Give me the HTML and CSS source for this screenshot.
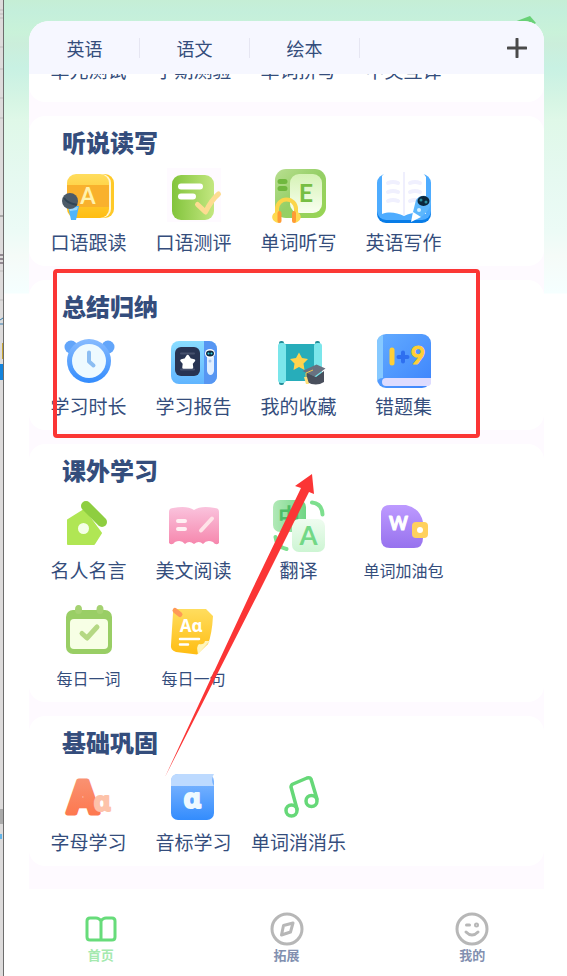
FILE: index.html
```html
<!DOCTYPE html>
<html lang="zh-CN">
<head>
<meta charset="utf-8">
<meta name="viewport" content="width=device-width, initial-scale=1">
<title>英语学习</title>
<link rel="stylesheet" href="styles.css">
</head>
<body>
<svg class="defs" width="0" height="0" aria-hidden="true">
  <defs>
    <linearGradient id="yellow" x1="0" y1="0" x2="0" y2="1"><stop offset="0" stop-color="#ffdd5e"/><stop offset="1" stop-color="#ffbd12"/></linearGradient>
    <linearGradient id="lime" x1="0" y1="0" x2="1" y2="0"><stop offset="0" stop-color="#82c43c"/><stop offset="1" stop-color="#c3e780"/></linearGradient>
    <linearGradient id="green" x1="0" y1="0" x2="1" y2="1"><stop offset="0" stop-color="#b9df91"/><stop offset=".5" stop-color="#95cf66"/><stop offset="1" stop-color="#98d552"/></linearGradient>
    <linearGradient id="pale" x1="0" y1="0" x2="0" y2="1"><stop offset="0" stop-color="#d5f2b5"/><stop offset="1" stop-color="#f9fff0"/></linearGradient>
    <linearGradient id="blue" x1="0" y1="0" x2="0" y2="1"><stop offset="0" stop-color="#87bbff"/><stop offset="1" stop-color="#338cfd"/></linearGradient>
    <linearGradient id="sky" x1="0" y1="0" x2="0" y2="1"><stop offset="0" stop-color="#8addff"/><stop offset="1" stop-color="#61b5ff"/></linearGradient>
    <linearGradient id="book" x1="0" y1="0" x2="1" y2="1"><stop offset="0" stop-color="#63acff"/><stop offset="1" stop-color="#3d84fc"/></linearGradient>
    <linearGradient id="pink" x1="0" y1="0" x2="0" y2="1"><stop offset="0" stop-color="#fac3dd"/><stop offset="1" stop-color="#f687ad"/></linearGradient>
    <linearGradient id="purple" x1="0" y1="0" x2="0" y2="1"><stop offset="0" stop-color="#bd9aff"/><stop offset="1" stop-color="#9772ee"/></linearGradient>
    <linearGradient id="mint" x1="0" y1="0" x2="1" y2="0"><stop offset="0" stop-color="#b2e9b7"/><stop offset="1" stop-color="#70d584"/></linearGradient>
    <linearGradient id="mintpale" x1="0" y1="0" x2="0" y2="1"><stop offset="0" stop-color="#effcf0"/><stop offset="1" stop-color="#cdf5d3"/></linearGradient>
    <linearGradient id="orange" x1="0" y1="0" x2="0" y2="1"><stop offset="0" stop-color="#f79b7e"/><stop offset="1" stop-color="#ff7044"/></linearGradient>
  </defs>
</svg>

<div class="app">
  <svg class="leaf" width="22" height="12" viewBox="0 0 22 12" aria-hidden="true"><path d="M0 6 16 0 22 7 14 12Z" fill="#69d177"/></svg>

  <div class="panel">
    <nav class="tabs" aria-label="学科">
      <a class="tab" href="#english">英语</a>
      <a class="tab" href="#chinese">语文</a>
      <a class="tab" href="#books">绘本</a>
      <button class="add" type="button" aria-label="添加">
        <svg width="20" height="20" viewBox="0 0 20 20"><path d="M10 1v18M1 10h18" stroke="#4a4a4a" stroke-width="3" stroke-linecap="round"/></svg>
      </button>
    </nav>

    <main class="cards">
      <section class="card card-cut" aria-label="测试">
        <ul class="grid">
          <li><a class="item" href="#"><span class="label">单元测试</span></a></li>
          <li><a class="item" href="#"><span class="label">学期测验</span></a></li>
          <li><a class="item" href="#"><span class="label">单词拼写</span></a></li>
          <li><a class="item" href="#"><span class="label">中英互译</span></a></li>
        </ul>
      </section>

      <section class="card">
        <h2>听说读写</h2>
        <ul class="grid">
          <li><a class="item" href="#">
            <svg class="icon" viewBox="0 0 54 54" aria-hidden="true">
              <rect x="12" y="6" width="40" height="44" rx="9" fill="#ffc928"/>
              <rect x="9" y="6" width="40" height="44" rx="9" fill="#fff6d4"/>
              <rect x="5" y="6" width="42" height="44" rx="9" fill="url(#yellow)"/>
              <path d="M5 17h42v22H5z" fill="#f9b12d"/>
              <text x="26" y="36" class="glyph" font-size="22" fill="#fff2ae">A</text>
              <path d="M6 38h11l-3 14h-5z" fill="#4fb5fb"/>
              <path d="M7 40l9-1-1 3-7 1z" fill="#9ad8ff"/>
              <circle cx="8" cy="33" r="8" fill="#4c5b69"/>
              <path d="M2 30c5 7 9 5 13 7" fill="none" stroke="#314555" stroke-width="2"/>
            </svg><span class="label">口语跟读</span></a></li>
          <li><a class="item" href="#">
            <svg class="icon" viewBox="0 0 54 54" aria-hidden="true">
              <rect width="54" height="54" fill="#fefaff"/>
              <rect x="5" y="7" width="42" height="45" rx="9" fill="url(#lime)"/>
              <path d="M14 18.500h19M14 28.500h12" stroke="#fff" stroke-width="6" stroke-linecap="round"/>
              <path d="M30.500 36.500l8 7.500c4-8 7-13 13-18" fill="none" stroke="#fddc91" stroke-width="5" stroke-linecap="round" stroke-linejoin="round"/>
            </svg><span class="label">口语测评</span></a></li>
          <li><a class="item" href="#">
            <svg class="icon" viewBox="0 0 54 54" aria-hidden="true">
              <rect x="3" y="1" width="51" height="49" rx="11" fill="url(#green)"/>
              <rect x="18" y="6" width="32" height="39" rx="9" fill="url(#pale)"/>
              <path d="M8 13.500h5M8 20.500h5" stroke="#70b83e" stroke-width="5" stroke-linecap="round"/>
              <text x="34" y="34" class="glyph" font-size="25" fill="#77be43">E</text>
              <path d="M5 47V41a9.500 9.500 0 0 1 19 0v6" fill="none" stroke="#fbd549" stroke-width="4"/>
              <path d="M7 43c-9 1-9 11 0 12zM22 43c9 1 9 11 0 12z" fill="#ffda50"/>
              <path d="M7.500 45v8M22 45v8" stroke="#ff9b35" stroke-width="4" stroke-linecap="round"/>
            </svg><span class="label">单词听写</span></a></li>
          <li><a class="item" href="#">
            <svg class="icon" viewBox="0 0 54 54" aria-hidden="true">
              <rect y="9" width="54" height="46" rx="9" fill="#087ce7"/>
              <rect y="6" width="54" height="46" rx="9" fill="#4eacff"/>
              <path d="M5 8c7-8 15-6 22-4 7-3 16-4 22 5v37c-8-3-15-1-22 2-7-3-14-5-22-2z" fill="#fff"/>
              <path d="M27 4v43" stroke="#efeffd" stroke-width="2"/>
              <path d="M11 15q5-2 10 0M11 24q5-2 10 0M11 33q5-2 10 0M33 15q5-2 10 0M33 24q5-2 10 0M33 33q5-2 9 0" fill="none" stroke="#f0f0fe" stroke-width="4" stroke-linecap="round"/>
              <path d="M39 32c4-7 14-5 15 2-1 7-5 12-14 18l-5-4z" fill="#5db7fd"/>
              <path d="M36 44l8 5-10 5z" fill="#fff"/>
              <ellipse cx="46.500" cy="33" rx="6" ry="5" fill="#0b273c"/>
              <circle cx="44" cy="32" r="1.500" fill="#2a8c9c"/><circle cx="49" cy="34" r="1.500" fill="#2a8c9c"/>
              <circle cx="42" cy="42" r="2" fill="#d9f2ff"/>
            </svg><span class="label">英语写作</span></a></li>
        </ul>
      </section>

      <section class="card">
        <h2>总结归纳</h2>
        <ul class="grid">
          <li><a class="item" href="#">
            <svg class="icon" viewBox="0 0 54 54" aria-hidden="true">
              <circle cx="9" cy="15" r="6.500" fill="#62a5fa"/><circle cx="46" cy="15" r="6.500" fill="#62a5fa"/>
              <circle cx="27" cy="29" r="22" fill="url(#blue)"/>
              <circle cx="27" cy="29" r="17" fill="#eefaff"/>
              <path d="M27 20.500V29.500l4.500 4" fill="none" stroke="#8bbdf2" stroke-width="4" stroke-linecap="round" stroke-linejoin="round"/>
            </svg><span class="label">学习时长</span></a></li>
          <li><a class="item" href="#">
            <svg class="icon" viewBox="0 0 54 54" aria-hidden="true">
              <rect x="4" y="9" width="46" height="43" rx="8" fill="url(#sky)"/>
              <path d="M37 9h5a8 8 0 0 1 8 8v27a8 8 0 0 1-8 8h-5z" fill="#5796f2"/>
              <rect x="8" y="15" width="25" height="29" rx="6" fill="#283453"/>
              <path d="M14 21.500h13M14 37.500h13" stroke="#46516e" stroke-width="2" stroke-linecap="round"/>
              <path d="M20.700 24l2.300 3.500 4 1-2.500 3 .5 4h-8.500l.5-4-2.500-3 4-1z" fill="#fff" stroke="#fff" stroke-width="2.500" stroke-linejoin="round"/>
              <path d="M40 25h7v14q-1 4-3.500 4T40 39z" fill="#e1efff"/>
              <ellipse cx="43" cy="21.500" rx="5" ry="4.500" fill="#fff"/>
              <ellipse cx="43" cy="21.500" rx="4" ry="3" fill="#102a40"/>
              <circle cx="41.500" cy="21.500" r="1" fill="#35d3df"/><circle cx="44.500" cy="21.500" r="1" fill="#35d3df"/>
              <circle cx="43" cy="29" r="1.500" fill="#a8c4ee"/>
            </svg><span class="label">学习报告</span></a></li>
          <li><a class="item" href="#">
            <svg class="icon" viewBox="0 0 54 54" aria-hidden="true">
              <rect x="7" y="9" width="5" height="44" rx="2" fill="#238f9b"/><rect x="43" y="9" width="5" height="30" rx="2" fill="#238f9b"/>
              <path d="M12 12h31v37H12z" fill="#27adba"/>
              <rect x="6" y="11" width="8" height="40" rx="3" fill="#7be6eb"/>
              <rect x="42" y="11" width="8" height="38" rx="3" fill="#7be6eb"/>
              <path d="M27 20.500l3 5.500 6 1-4.500 4.500 1 6.500-5.500-3-5.500 3 1-6.500-4.500-4.500 6-1z" fill="#ffd34d"/>
              <path d="M34 40l10 5 8-6v11q-8 5-17 0z" fill="#494f5c"/>
              <path d="M30.500 39l14-6.500 9 4-11 8z" fill="#697180"/>
              <path d="M41 38l-7 3v6" fill="none" stroke="#f3c74b" stroke-width="1"/>
              <path d="M32 45h3l2 7h-3z" fill="#ffe07a"/>
            </svg><span class="label">我的收藏</span></a></li>
          <li><a class="item" href="#">
            <svg class="icon" viewBox="0 0 54 54" aria-hidden="true">
              <rect y="2" width="54" height="54" rx="9" fill="url(#book)"/>
              <path d="M6 3v43q-5 0-6 4V11q0-7 6-8z" fill="#86c9ff"/>
              <path d="M54 46v6l-2 2H9q-4 0-4-4t4-4z" fill="#dedcff"/>
              <path d="M21.500 25h9M26 20.500v9" stroke="#2e6ff0" stroke-width="4" stroke-linecap="round"/>
              <path d="M15 18v13" stroke="#ffcf35" stroke-width="5" stroke-linecap="round"/>
              <text x="41" y="32" class="glyph thick" font-size="25" fill="#ffcf35" stroke="#ffcf35">9</text>
            </svg><span class="label">错题集</span></a></li>
        </ul>
      </section>

      <section class="card">
        <h2>课外学习</h2>
        <ul class="grid">
          <li><a class="item" href="#">
            <svg class="icon" viewBox="0 0 54 54" aria-hidden="true">
              <path d="M6 24l16-10 17 23-7 11H6z" fill="#b0e654" stroke="#b0e654" stroke-width="2" stroke-linejoin="round"/>
              <path d="M24 10l16 16" stroke="#8ece40" stroke-width="10" stroke-linecap="round"/>
              <circle cx="21.500" cy="32.500" r="5.500" fill="#f4ffe6"/>
            </svg><span class="label">名人名言</span></a></li>
          <li><a class="item" href="#">
            <svg class="icon" viewBox="0 0 54 54" aria-hidden="true">
              <path d="M2 16q0-4 4-4 14-3 21 2 7-5 21-2 4 0 4 4v31q-3 3-6-1-6-3-10 2-4-4-9 0-5-4-9 0-4-5-10-2-3 4-6 1z" fill="url(#pink)"/>
              <path d="M11 25h7M11 33h7" stroke="#fff0f3" stroke-width="4" stroke-linecap="round"/>
              <path d="M34 34.500l11-12" stroke="#ffe4e8" stroke-width="4" stroke-linecap="round"/>
            </svg><span class="label">美文阅读</span></a></li>
          <li><a class="item" href="#">
            <svg class="icon" viewBox="0 0 54 54" aria-hidden="true">
              <rect x="1" y="4" width="33" height="32" rx="7" fill="url(#mint)"/>
              <text x="17" y="28" class="glyph" font-size="22" fill="#4dbd67">中</text>
              <rect x="20" y="23" width="33" height="33" rx="7" fill="url(#mintpale)"/>
              <text x="36.500" y="49" class="glyph" font-size="26" fill="#72d886">A</text>
              <path d="M40 6.500q10 1 10.500 12M3.500 41q1 10 11 12" fill="none" stroke="#7ddf8e" stroke-width="4" stroke-linecap="round"/>
            </svg><span class="label">翻译</span></a></li>
          <li><a class="item" href="#">
            <svg class="icon" viewBox="0 0 54 54" aria-hidden="true">
              <path d="M13 9h16q14 3 17 17v16q0 10-9 10H13q-9 0-9-9V18q0-9 9-9z" fill="url(#purple)"/>
              <text x="21.500" y="34" class="glyph thick" font-size="18" fill="#fff" stroke="#fff">W</text>
              <rect x="35" y="26" width="16" height="16" rx="4" fill="#ffd15e"/>
              <circle cx="43" cy="34" r="3" fill="#fff"/>
            </svg><span class="label label-small">单词加油包</span></a></li>
          <li><a class="item" href="#">
            <svg class="icon" viewBox="0 0 54 54" aria-hidden="true">
              <rect x="4" y="6" width="46" height="44" rx="7" fill="#99ce65"/>
              <rect x="8" y="15" width="38" height="30" rx="4" fill="#f7ffe5"/>
              <ellipse cx="16.500" cy="5.500" rx="3.500" ry="4.500" fill="#a5d272"/><ellipse cx="38" cy="5.500" rx="3.500" ry="4.500" fill="#a5d272"/>
              <path d="M20 29.500l5 4.500 10-11" fill="none" stroke="#b5d884" stroke-width="5" stroke-linecap="round" stroke-linejoin="round"/>
            </svg><span class="label label-small">每日一词</span></a></li>
          <li><a class="item" href="#">
            <svg class="icon" viewBox="0 0 54 54" aria-hidden="true">
              <path d="M6 9q0-4 5-4h28l7 7q-1 18-5 28L30 50.500 9 48q-6-2-5-7z" fill="url(#yellow)"/>
              <path d="M8 6.500l5 4" stroke="#ff9957" stroke-width="5" stroke-linecap="round"/>
              <text x="24" y="28" class="glyph alt" font-size="17" fill="#fff">Aɑ</text>
              <path d="M13 35h19M13 40.500h8" stroke="#fff" stroke-width="2.500" stroke-linecap="round"/>
              <path d="M43 37l-12 13q-2-8 1-10 5 1 6-3z" fill="#fff5bc"/>
            </svg><span class="label label-small">每日一句</span></a></li>
        </ul>
      </section>

      <section class="card">
        <h2>基础巩固</h2>
        <ul class="grid">
          <li><a class="item" href="#">
            <svg class="icon" viewBox="0 0 54 54" aria-hidden="true">
              <text x="21" y="45" class="glyph alt chunky" font-size="44" fill="url(#orange)" stroke="url(#orange)">A</text>
              <text x="40" y="43" class="glyph alt chunky-small" font-size="26" fill="#fdc2a9" stroke="#fdc2a9">ɑ</text>
            </svg><span class="label">字母学习</span></a></li>
          <li><a class="item" href="#">
            <svg class="icon" viewBox="0 0 54 54" aria-hidden="true">
              <rect x="4" y="6" width="43" height="46" rx="7" fill="url(#blue)"/>
              <path d="M4 18v-5q0-7 7-7h36q-4 6 0 12z" fill="#bddaff"/>
              <text x="25" y="40" class="glyph alt chunky-small" font-size="27" fill="#eef9ff" stroke="#eef9ff">ɑ</text>
            </svg><span class="label">音标学习</span></a></li>
          <li><a class="item" href="#">
            <svg class="icon" viewBox="0 0 54 54" aria-hidden="true">
              <g fill="none" stroke="#66d878" stroke-width="3.500" stroke-linecap="round" stroke-linejoin="round">
                <circle cx="19.500" cy="42.500" r="5.500"/><circle cx="39.500" cy="33" r="5.500"/>
                <path d="M25 41L19 19q0-2 2-3l14-6q3-1 4 1l6 20"/>
              </g>
            </svg><span class="label">单词消消乐</span></a></li>
        </ul>
      </section>
    </main>
  </div>

  <nav class="bottom" aria-label="主导航">
    <a class="nav-item active" href="#home">
      <svg width="34" height="34" viewBox="0 0 34 34" fill="none" stroke="currentColor" stroke-width="3" stroke-linejoin="round" aria-hidden="true"><path d="M17 9q-2-3-5-3H6Q3 6 3 9v16q0 3 3 3h22q3 0 3-3V9q0-3-3-3h-6q-3 0-5 3zv19"/></svg>
      <span>首页</span>
    </a>
    <a class="nav-item" href="#explore">
      <svg width="34" height="34" viewBox="0 0 34 34" fill="none" stroke="currentColor" stroke-width="3" stroke-linejoin="round" aria-hidden="true"><circle cx="17" cy="17" r="15"/><path d="M13.500 13.500L23 11l-2.500 9-9 3z"/></svg>
      <span>拓展</span>
    </a>
    <a class="nav-item" href="#mine">
      <svg width="34" height="34" viewBox="0 0 34 34" fill="none" stroke="currentColor" stroke-width="3" stroke-linecap="round" aria-hidden="true"><circle cx="17" cy="17" r="15"/><path d="M11.500 13h3M11 20q6 6 12 0"/><circle cx="21.500" cy="13" r="1"/></svg>
      <span>我的</span>
    </a>
  </nav>
</div>

<svg class="annotation" width="567" height="976" viewBox="0 0 567 976" aria-hidden="true">
  <rect x="55" y="271" width="423" height="165" rx="2" fill="none" stroke="#fb3535" stroke-width="4"/>
  <path d="M312 474L314 494l-5-2-49 98L165 777l87-187 49-102-6-2z" fill="#fb3535"/>
</svg>
<svg class="behind" width="3" height="976" viewBox="0 0 3 976" aria-hidden="true">
  <path d="M0 10h3M0 14h3M0 18h3M0 47h3M0 69h3M0 98h3M0 118h3M0 271h3M0 300h3" stroke="#bdbbbb"/>
  <path d="M0 216h3" stroke="#777"/>
  <path d="M0 255h3M0 259h3M0 263h3" stroke="#483848"/>
  <path d="M0 320l3-2M0 324h3" stroke="#347cad"/>
  <path d="M2 343h1v16H2z" fill="#c9a632"/>
  <path d="M0 364h3v16H0z" fill="#1383dc"/>
  <path d="M0 809h3v15H0z" fill="#aaa"/>
  <path d="M0 834h2v5H0z" fill="#62b4e8"/>
</svg>
</body>
</html>
```
FILE: styles.css
```css
* {
  box-sizing: border-box;
}

body {
  margin: 0;
  position: relative;
  min-height: 100vh;
  padding-left: 3px;
  background: #dddbdb;
  color: #344d7c;
  font-family: "Noto Sans CJK SC", "Noto Sans", sans-serif;
  overflow-x: hidden;
}

a {
  color: inherit;
  text-decoration: none;
}

.defs,
.annotation,
.behind {
  position: absolute;
  top: 0;
  left: 0;
  pointer-events: none;
}

.app {
  position: relative;
  display: flex;
  flex-direction: column;
  min-height: 100vh;
  padding-top: 21px;
  border-left: 1px solid #6d6d6d;
  background: linear-gradient(#c5eed5 0, #c4efdb 12px, #c9f2d9 32px, #cbeedb 44px, #c8f1e3 68px, #d6f5e4 100px, #dff8e8 120px, #e6f9f1 180px, #ecfbf6 230px, #f5fbf8 256px, #f5ffff 293px, #fff 294px);
}

.leaf {
  position: absolute;
  top: 16px;
  right: 31px;
}

.panel {
  position: relative;
  margin: 0 23px 0 25px;
  padding-bottom: 23px;
  border-radius: 20px 20px 0 0;
  background: #fefaff;
  overflow: hidden;
}

.tabs {
  display: flex;
  align-items: center;
  height: 53px;
  padding: 0 13px 0 1px;
  background: #f6f7ff;
}

.tab {
  width: 110px;
  border-right: 1px solid #e6e6f2;
  font-size: 18px;
  line-height: 20px;
  text-align: center;
}

.add {
  display: grid;
  place-items: center;
  width: 28px;
  height: 28px;
  margin-left: auto;
  padding: 0;
  border: 0;
  background: none;
}

.cards {
  display: grid;
  gap: 14px;
}

.card {
  padding: 11px 7px 10px;
  border-radius: 16px;
  background: #fff;
}

.card-cut {
  display: flex;
  align-items: flex-end;
  height: 28px;
  padding: 0 7px 18px;
  border-radius: 0 0 16px 16px;
  overflow: hidden;
}

h2 {
  margin: 0 0 11px 26px;
  font-size: 24px;
  font-weight: 900;
  line-height: 30px;
}

.grid {
  display: grid;
  grid-template-columns: repeat(4, 105px);
  row-gap: 20px;
  margin: 0;
  padding: 0;
  list-style: none;
}

.item {
  display: flex;
  flex-direction: column;
  align-items: center;
  gap: 6px;
}

.icon {
  width: 54px;
  height: 54px;
  overflow: visible;
}

.label {
  font-size: 19px;
  line-height: 28px;
  white-space: nowrap;
}

.label-small {
  font-size: 16px;
}

.glyph {
  font-family: Lato, "Noto Sans CJK SC", sans-serif;
  font-weight: 700;
  text-anchor: middle;
}

.alt {
  font-family: "Noto Sans", "DejaVu Sans", sans-serif;
}

.thick {
  stroke-width: 1px;
  stroke-linejoin: round;
}

.chunky {
  stroke-width: 5px;
  stroke-linejoin: round;
}

.chunky-small {
  stroke-width: 2px;
  stroke-linejoin: round;
}

.bottom {
  display: flex;
  flex: 1;
  padding: 23px 2px 10px 4px;
  background: #fff;
}

.nav-item {
  display: flex;
  flex: 1;
  flex-direction: column;
  align-items: center;
  color: #b7b7b7;
}

.nav-item span {
  color: #8290b0;
  font-size: 13px;
  font-weight: 700;
  line-height: 18px;
}

.nav-item.active {
  color: #67dc7a;
}

.nav-item.active span {
  color: #a5e9af;
}
```
